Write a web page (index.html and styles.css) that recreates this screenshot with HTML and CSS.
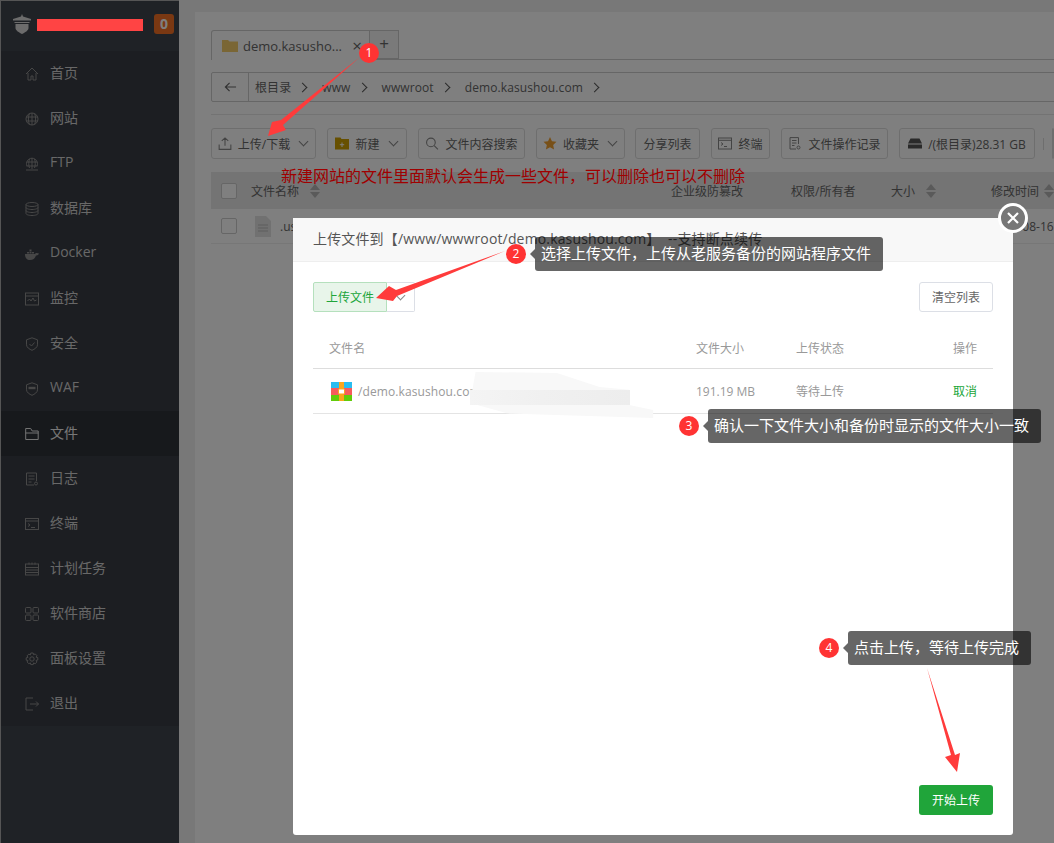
FILE: index.html
```html
<!doctype html>
<html lang="zh-CN">
    <head>
        <meta charset="UTF-8" />
        <meta name="viewport" content="width=device-width, initial-scale=1.0" />
        <title>文件管理</title>
        <link rel="stylesheet" href="styles.css">
    </head>
    <body>
        <div class="app">
            <aside class="sidebar">
                <div class="brand">
                    <svg class="logo" viewBox="0 0 18 20"><path d="M9 0l1 2.500 8 2.500v1.500H0V5l8-2.500zM1.500 8h15v1h-15zM2.500 10h13v4c0 2.500-3.500 4.500-6.500 6-3-1.500-6.500-3.500-6.500-6z" fill="#d8d8d8"/></svg>
                    <span class="badge">0</span>
                </div>
                <nav class="menu">
                    <a class="menu-item"><svg viewBox="0 0 14 14"><path d="M1 7l6-6 6 6M3 6v7h3V9h2v4h3V6"/></svg>首页</a>
                    <a class="menu-item"><svg viewBox="0 0 14 14"><circle cx="7" cy="7" r="6"/><path d="M1 5h12M1 9h12M7 1v12M4.500 1.500c-1.500 3-1.500 8 0 11M9.500 1.500c1.500 3 1.500 8 0 11"/></svg>网站</a>
                    <a class="menu-item"><svg viewBox="0 0 14 14"><path d="M1 13h12M2 5h10M1.500 9h11M7 1v11M2 9a5.500 5.500 0 1 1 10 0M4.500 2c-1 2-1 7 0 9M9.500 2c1 2 1 7 0 9"/></svg>FTP</a>
                    <a class="menu-item"><svg viewBox="0 0 14 14"><ellipse cx="7" cy="2.500" rx="6" ry="2"/><path d="M1 2.500v9c0 1 2.500 2 6 2s6-1 6-2v-9M1 5.500c0 1 2.500 2 6 2s6-1 6-2M1 8.500c0 1 2.500 2 6 2s6-1 6-2"/></svg>数据库</a>
                    <a class="menu-item"><svg viewBox="0 0 14 14"><path class="solid" d="M0 7h10c.5-1 2-1.500 4-.5-1 2-2 2-3 2-1 3-3 4.500-6 4.500-3 0-5-2-5-6zM2 5h2v1.500H2zM4.500 5h2v1.500h-2zM7 5h2v1.500H7zM4.500 2.500h2v2h-2z"/></svg>Docker</a>
                    <a class="menu-item"><svg viewBox="0 0 14 14"><rect x=".5" y="1" width="13" height="12"/><path d="M1 4h12M2.500 9l2-2 1.500 2 2-3 1.500 3 2-1"/></svg>监控</a>
                    <a class="menu-item"><svg viewBox="0 0 14 14"><path d="M7 .8l5.500 2v5c0 2.500-3 4.500-5.500 5.500-2.500-1-5.500-3-5.500-5.500v-5zM4.500 7l2 2 3-3.500"/></svg>安全</a>
                    <a class="menu-item"><svg viewBox="0 0 14 14"><path d="M7 .8l5.500 2v5c0 2.500-3 4.500-5.500 5.500-2.500-1-5.500-3-5.500-5.500v-5z"/><path d="M3.500 4.800h7v2.400h-7z" class="solid"/></svg>WAF</a>
                    <a class="menu-item active"><svg viewBox="0 0 14 14"><path d="M.7 12.500V1.500h5l1.500 2.500h6v8.500zM.7 6h12.600"/></svg>文件</a>
                    <a class="menu-item"><svg viewBox="0 0 14 14"><path d="M9 13H1.500V1h10v8M3.500 4h6M3.500 7h6M3.500 10h3"/><circle cx="11" cy="11.500" r="1.500"/></svg>日志</a>
                    <a class="menu-item"><svg viewBox="0 0 14 14"><rect x=".5" y="1.500" width="13" height="11"/><path d="M1 4h12M3 6.500l2 1.500-2 1.500M6 10.500h4"/></svg>终端</a>
                    <a class="menu-item"><svg viewBox="0 0 14 14"><rect x=".5" y="2" width="13" height="11"/><path d="M1 5.500h12M1 8h12M1 10.500h12M4 .5v2M7 .5v2M10 .5v2"/></svg>计划任务</a>
                    <a class="menu-item"><svg viewBox="0 0 14 14"><rect x=".5" y=".5" width="5.500" height="5.500" rx="1"/><rect x="8" y=".5" width="5.500" height="5.500" rx="1"/><rect x=".5" y="8" width="5.500" height="5.500" rx="1"/><rect x="8" y="8" width="5.500" height="5.500" rx="1"/></svg>软件商店</a>
                    <a class="menu-item"><svg viewBox="0 0 14 14"><circle cx="7" cy="7" r="2.200"/><path d="M5.800 1h2.400l.4 1.700 1.600-.8 1.700 1.700-.8 1.600 1.700.4v2.400l-1.700.4.800 1.600-1.700 1.700-1.600-.8-.4 1.700H5.800l-.4-1.700-1.600.8-1.700-1.700.8-1.600L1.200 8.200V5.800l1.700-.4-.8-1.600 1.700-1.700 1.600.8z"/></svg>面板设置</a>
                    <a class="menu-item"><svg viewBox="0 0 14 14"><path d="M8 1H1v12h7M5 7h8.500M11 4.500L13.500 7 11 9.500"/></svg>退出</a>
                </nav>
            </aside>

            <main class="content">
                <div class="panel">
                    <div class="tabs">
                        <div class="tab">
                            <svg class="tab-folder" viewBox="0 0 16 13"><path d="M0 1h6l1.500 1.500H16V13H0z" fill="#f5cd6b"/></svg>
                            <span>demo.kasusho...</span>
                            <span class="tab-close">×</span>
                        </div>
                        <div class="tab-add">+</div>
                    </div>

                    <div class="crumbs">
                        <span class="crumb-back"><svg viewBox="0 0 14 12"><path d="M13 6H1.500M6 1.500L1.500 6 6 10.500"/></svg></span>
                        <span>根目录</span><i class="chev"></i>
                        <span>www</span><i class="chev"></i>
                        <span>wwwroot</span><i class="chev"></i>
                        <span>demo.kasushou.com</span><i class="chev"></i>
                    </div>

                    <div class="toolbar">
                        <button class="tool w-upload"><svg viewBox="0 0 12 12"><path d="M6 8V1M3 3.500L6 .8l3 2.700M.6 7v4.400h10.800V7"/></svg>上传/下载<i class="caret"></i></button>
                        <button class="tool w-new"><svg viewBox="0 0 14 12"><path class="gold" d="M0 0h5.500l1 1.500H14V12H0z"/><path d="M7 5v4.500M4.800 7.200h4.400" stroke="#fff"/></svg>新建<i class="caret"></i></button>
                        <button class="tool w-search"><svg viewBox="0 0 12 12"><circle cx="5" cy="5" r="4"/><path d="M8 8l3.500 3.500"/></svg>文件内容搜索</button>
                        <button class="tool w-fav"><svg viewBox="0 0 14 14"><path class="star" d="M7 0l2.100 4.600 4.900.6-3.600 3.300 1 4.900L7 11l-4.400 2.400 1-4.900L0 5.200l4.900-.6z"/></svg>收藏夹<i class="caret"></i></button>
                        <button class="tool w-share">分享列表</button>
                        <button class="tool w-term"><svg viewBox="0 0 14 12"><rect x=".5" y=".5" width="13" height="11"/><path d="M1 2.800h12M3 5l2 1.500L3 8M6 9h3"/></svg>终端</button>
                        <button class="tool w-log"><svg viewBox="0 0 12 13"><path d="M7 12H1V.6h8.500V7M3 3.500h4.500M3 6h4.500M3 8.500h2.500"/><circle cx="9.500" cy="10.500" r="1.500"/></svg>文件操作记录</button>
                        <button class="tool w-disk"><svg viewBox="0 0 14 10"><path class="dark" d="M2.500 0h9L14 5H0zM0 6h14v4H0z"/></svg>/(根目录)28.31 GB</button>
                        <span class="tool-sep"></span>
                        <button class="tool"></button>
                    </div>

                    <div class="table-row table-head">
                        <span class="col-check"><i class="checkbox"></i></span>
                        <span class="col-name">文件名称<i class="sort"></i></span>
                        <span class="col-guard">企业级防篡改</span>
                        <span class="col-perm">权限/所有者</span>
                        <span class="col-size">大小<i class="sort"></i></span>
                        <span class="col-time">修改时间<i class="sort sort-near"></i></span>
                    </div>
                    <div class="table-row">
                        <span class="col-check"><i class="checkbox"></i></span>
                        <span class="col-name"><svg class="file-icon" viewBox="0 0 16 21"><path d="M0 0h11l5 5v16H0z" fill="#e2e2e2"/><path d="M3 9h10M3 12h10M3 15h10" stroke="#bbb"/></svg>.user.ini</span>
                        <span class="col-guard"></span>
                        <span class="col-perm"></span>
                        <span class="col-size"></span>
                        <span class="col-time">2024-08-16</span>
                    </div>
                </div>
            </main>
        </div>

        <div class="overlay"></div>

        <section class="modal">
            <header class="modal-head">上传文件到【/www/wwwroot/demo.kasushou.com】&nbsp;&nbsp;--支持断点续传</header>
            <div class="modal-body">
                <div class="upload-bar">
                    <div class="split">
                        <button class="btn-file">上传文件</button>
                        <button class="btn-drop"><i class="caret"></i></button>
                    </div>
                    <button class="btn-clear">清空列表</button>
                </div>
                <div class="up-row up-head">
                    <span class="up-name">文件名</span>
                    <span class="up-size">文件大小</span>
                    <span class="up-state">上传状态</span>
                    <span class="up-op">操作</span>
                </div>
                <div class="up-row">
                    <span class="up-name">
                        <svg class="zip" viewBox="0 0 21 19"><path d="M0 0h21v6H0z" fill="#29bdf0"/><path d="M0 6h21v7H0z" fill="#f75b5b"/><path d="M0 13h21v6H0z" fill="#62cc0a"/><path d="M8 0h5v19H8z" fill="#fba61c"/><rect x="7.500" y="7" width="6" height="5" rx="1" fill="#fff" stroke="#fba61c"/></svg>
                        /demo.kasushou.com
                    </span>
                    <span class="up-size">191.19 MB</span>
                    <span class="up-state">等待上传</span>
                    <span class="up-op link">取消</span>
                </div>
                <div class="modal-foot">
                    <button class="btn-start">开始上传</button>
                </div>
            </div>
            <div class="smudge"></div>
            <div class="smudge-bar"></div>
            <button class="modal-close"><svg viewBox="0 0 14 14"><path d="M2 2l10 10M12 2L2 12"/></svg></button>
        </section>

        <!-- screenshot annotations -->
        <div class="scribble"></div>
        <p class="remark">新建网站的文件里面默认会生成一些文件，可以删除也可以不删除</p>
        <svg class="arrows" viewBox="0 0 1054 843">
            <path d="M360 57L281 120 272 122 268 136 286 130 283 125z"/>
            <path d="M505 251L396 290 389 286 376 298 393 301 397 296z"/>
            <path d="M927 668L951 755 945 757 957 772 960 753 955 755z"/>
        </svg>
        <div class="note note-1"><b>1</b></div>
        <div class="note note-2"><b>2</b><span>选择上传文件，上传从老服务备份的网站程序文件</span></div>
        <div class="note note-3"><b>3</b><span>确认一下文件大小和备份时显示的文件大小一致</span></div>
        <div class="note note-4"><b>4</b><span>点击上传，等待上传完成</span></div>
    </body>
</html>
```

FILE: styles.css
```css
:root {
    --font: "Open Sans", "Noto Sans CJK SC", sans-serif;
    --border-color: #dcdfe6;
    --green: #20a53a;
    --text-color: #666;
}

* {
    box-sizing: border-box;
}

body {
    font-family: var(--font);
    margin: 0;
    height: 843px;
    overflow: hidden;
    position: relative;
    color: var(--text-color);
}

button {
    font-family: var(--font);
    font-size: 12px;
    background: #fff;
    color: var(--text-color);
    cursor: pointer;
    padding: 0;
}

.app {
    display: flex;
    height: 843px;
    background: #f0f0f0;
}

/* Sidebar */
.sidebar {
    width: 179px;
    flex: none;
    background: #3f454d;
    border-left: 1px solid #aaa;
    border-top: 1px solid #aaa;
}

.brand {
    height: 50px;
    padding: 13px 5px 0 12px;
    display: flex;
    justify-content: space-between;
    align-items: flex-start;
}

.logo {
    width: 18px;
    height: 20px;
}

.badge {
    width: 20px;
    height: 20px;
    border-radius: 3px;
    background: #f57125;
    color: #fff;
    font-size: 14px;
    font-weight: 700;
    line-height: 20px;
    text-align: center;
}

.menu {
    background: #383c44;
}

.menu-item {
    height: 45px;
    display: flex;
    align-items: center;
    gap: 11px;
    padding: 0 0 4px 24px;
    font-size: 14px;
    color: #d0d0d0;
}

.menu-item svg {
    width: 14px;
    height: 14px;
    margin-top: 4px;
    fill: none;
    stroke: #8e8e8e;
}

.menu-item svg .solid {
    fill: #8e8e8e;
    stroke: none;
}

.menu-item.active {
    background: #2e3238;
    color: #eee;
}

.menu-item.active svg {
    stroke: #e8e8e8;
}

/* File manager */
.content {
    flex: 1;
    padding: 12px 0 0 16px;
    background: #f0f0f0;
    min-width: 0;
}

.panel {
    background: #fff;
    height: 100%;
    padding: 18px 0 0 16px;
    overflow: hidden;
}

.tabs {
    display: flex;
    height: 30px;
    border-bottom: 1px solid #ccc;
    font-size: 13px;
}

.tab {
    width: 159px;
    height: 30px;
    display: flex;
    align-items: center;
    gap: 5px;
    padding: 0 10px;
    border: 1px solid #ccc;
    border-bottom: none;
    border-radius: 3px 0 0 0;
    background: #fff;
    white-space: nowrap;
}

.tab-folder {
    width: 16px;
    height: 13px;
    flex: none;
}

.tab-close {
    font-size: 17px;
    margin-left: auto;
    margin-right: -3px;
    line-height: 1;
}

.tab-add {
    width: 29px;
    height: 29px;
    border: 1px solid #ccc;
    border-left: none;
    background: #f5f5f5;
    text-align: center;
    font-size: 17px;
    line-height: 25px;
}

.crumbs {
    display: flex;
    align-items: center;
    width: 900px;
    height: 30px;
    margin-top: 12px;
    border: 1px solid #ccc;
    border-radius: 2px;
    font-size: 12px;
    letter-spacing: 0.1px;
}

.crumb-back {
    width: 37px;
    height: 100%;
    margin-right: 6px;
    border-right: 1px solid #ccc;
    display: flex;
    align-items: center;
    justify-content: center;
}

.crumb-back svg {
    width: 13px;
    height: 12px;
    fill: none;
    stroke: #666;
    stroke-width: 1.300;
}

.chev {
    width: 7px;
    height: 7px;
    border-top: 1px solid #555;
    border-right: 1px solid #555;
    transform: rotate(45deg);
    margin: 0 16px 0 8px;
}

.toolbar {
    display: flex;
    align-items: center;
    gap: 11px;
    margin-top: 12px;
    padding-top: 13px;
    border-top: 1px solid #e6e6e6;
    width: 900px;
}

.tool {
    height: 31px;
    flex: none;
    display: flex;
    align-items: center;
    justify-content: center;
    gap: 6px;
    border: 1px solid #ddd;
    border-radius: 3px;
    white-space: nowrap;
}

.tool svg {
    width: 14px;
    height: 13px;
    fill: none;
    stroke: #888;
}

.tool svg .gold {
    fill: #cfa000;
    stroke: none;
}

.tool svg .star {
    fill: #f0a030;
    stroke: none;
}

.tool svg .dark {
    fill: #555;
    stroke: none;
}

.w-upload { width: 105px; }
.w-new { width: 80px; }
.w-search { width: 107px; }
.w-fav { width: 89px; }
.w-share { width: 65px; margin-left: -1px; }
.w-term { width: 59px; }
.w-log { width: 107px; }
.w-disk { width: 136px; }
.tool-sep { width: 1px; height: 12px; background: #ddd; margin: 0 -3px 0 -3px; }

.caret {
    width: 7px;
    height: 7px;
    border-right: 1px solid #888;
    border-bottom: 1px solid #888;
    transform: rotate(45deg);
    margin: -4px 2px 0 4px;
}

.table-row {
    display: flex;
    align-items: center;
    width: 900px;
    height: 35px;
    font-size: 12px;
    border-bottom: 1px solid #eee;
    white-space: nowrap;
}

.table-head {
    height: 37px;
    margin-top: 13px;
    background: #e8e8e8;
    border-bottom: none;
}

.col-check { width: 40px; padding-left: 10px; display: flex; }
.col-name { width: 420px; display: flex; align-items: center; }
.col-guard { width: 120px; }
.col-perm { width: 100px; }
.col-size { width: 100px; display: flex; align-items: center; }
.col-time { display: flex; align-items: center; }

.checkbox {
    width: 16px;
    height: 16px;
    background: #fff;
    border: 1px solid #ccc;
    border-radius: 2px;
}

.sort {
    width: 10px;
    height: 14px;
    margin-left: 11px;
    display: flex;
    flex-direction: column;
    gap: 2px;
}

.sort::before,
.sort::after {
    content: "";
    border-style: solid;
    border-color: transparent;
    border-width: 0 5px;
}

.sort::before {
    border-bottom: 6px solid #b4b4b4;
}

.sort::after {
    border-top: 6px solid #b4b4b4;
}

.sort-near {
    margin-left: 5px;
}

.file-icon {
    width: 16px;
    height: 21px;
    margin: 0 9px 0 4px;
}

.overlay {
    position: absolute;
    inset: 0;
    background: rgba(0, 0, 0, 0.5);
}

/* Upload dialog */
.modal {
    position: absolute;
    left: 293px;
    top: 218px;
    width: 720px;
    height: 617px;
    background: #fff;
    border-radius: 3px;
    display: flex;
    flex-direction: column;
}

.modal-head {
    height: 44px;
    padding: 0 20px;
    background: #f8f8f8;
    border-bottom: 1px solid #eee;
    font-size: 14px;
    letter-spacing: 0.15px;
    line-height: 41px;
    color: #555;
    white-space: nowrap;
}

.modal-body {
    flex: 1;
    padding: 20px;
    display: flex;
    flex-direction: column;
}

.upload-bar {
    display: flex;
    justify-content: space-between;
}

.split {
    display: flex;
}

.btn-file {
    width: 74px;
    height: 30px;
    background: #e8f5ea;
    border: 1px solid #b5e0bd;
    border-radius: 2px 0 0 2px;
    color: var(--green);
}

.btn-drop {
    width: 28px;
    height: 30px;
    border: 1px solid var(--border-color);
    border-left: none;
    border-radius: 0 2px 2px 0;
}

.btn-drop .caret {
    display: block;
    margin: -4px auto 0;
}

.btn-clear {
    width: 74px;
    height: 30px;
    border: 1px solid var(--border-color);
    border-radius: 3px;
}

.up-row {
    display: flex;
    align-items: center;
    height: 45px;
    padding: 0 16px;
    font-size: 12px;
    color: #999;
    border-bottom: 1px solid #e4e4e4;
}

.up-head {
    height: 38px;
    margin-top: 19px;
    padding-bottom: 3px;
    border-bottom: 1px solid #ddd;
}

.up-name {
    width: 367px;
    display: flex;
    align-items: center;
    gap: 6px;
    letter-spacing: 0.1px;
    white-space: nowrap;
}

.zip {
    width: 21px;
    height: 19px;
    margin-left: 2px;
}

.up-size { width: 100px; }
.up-state { width: 100px; }
.up-op { margin-left: auto; }
.link { color: var(--green); }

.modal-foot {
    margin-top: auto;
    display: flex;
    justify-content: flex-end;
}

.btn-start {
    width: 74px;
    height: 30px;
    background: var(--green);
    border: none;
    border-radius: 3px;
    color: #fff;
}

/* mosaic the screenshot's author painted over the file name */
.smudge {
    position: absolute;
    left: 177px;
    top: 154px;
    width: 185px;
    height: 47px;
    background: #f8f8f8;
    clip-path: polygon(3% 0, 47% 2%, 70% 32%, 86% 38%, 86% 70%, 99% 81%, 99% 98%, 20% 88%, 0 66%);
}

.smudge-bar {
    position: absolute;
    left: 177px;
    top: 172px;
    width: 160px;
    height: 15px;
    background: linear-gradient(90deg, #f4f4f4, #f0f0f0 45%, #ededed);
}

.modal-close {
    position: absolute;
    right: -15px;
    top: -15px;
    width: 30px;
    height: 30px;
    border-radius: 50%;
    border: 3px solid #fff;
    background: #777;
    display: flex;
    align-items: center;
    justify-content: center;
}

.modal-close svg {
    width: 14px;
    height: 14px;
    stroke: #fff;
    stroke-width: 2.200;
}

/* Annotations */
.scribble {
    position: absolute;
    left: 37px;
    top: 19px;
    width: 106px;
    height: 12px;
    background: #ff4444;
}

.remark {
    position: absolute;
    left: 281px;
    top: 165px;
    margin: 0;
    font-size: 16px;
    line-height: 22px;
    color: #a00000;
    white-space: nowrap;
}

.arrows {
    position: absolute;
    inset: 0;
    width: 1054px;
    height: 843px;
    fill: #ff3b3b;
}

.note {
    position: absolute;
    display: flex;
    align-items: center;
    gap: 9px;
}

.note b {
    width: 20px;
    height: 20px;
    border-radius: 50%;
    background: #ff3333;
    color: #fff;
    font-size: 12px;
    font-weight: 400;
    line-height: 20px;
    text-align: center;
}

.note span {
    position: relative;
    height: 34px;
    padding: 0 12px 0 6px;
    background: rgba(0, 0, 0, 0.6);
    border-radius: 3px;
    color: #fff;
    font-size: 15px;
    line-height: 33px;
    white-space: nowrap;
}

.note span::before {
    content: "";
    position: absolute;
    left: -5px;
    top: 12px;
    border-style: solid;
    border-width: 5px 5px 5px 0;
    border-color: transparent rgba(0, 0, 0, 0.6) transparent transparent;
}

.note-1 { left: 359px; top: 43px; }
.note-2 { left: 506px; top: 237px; }
.note-3 { left: 679px; top: 409px; }
.note-4 { left: 819px; top: 631px; }
```
